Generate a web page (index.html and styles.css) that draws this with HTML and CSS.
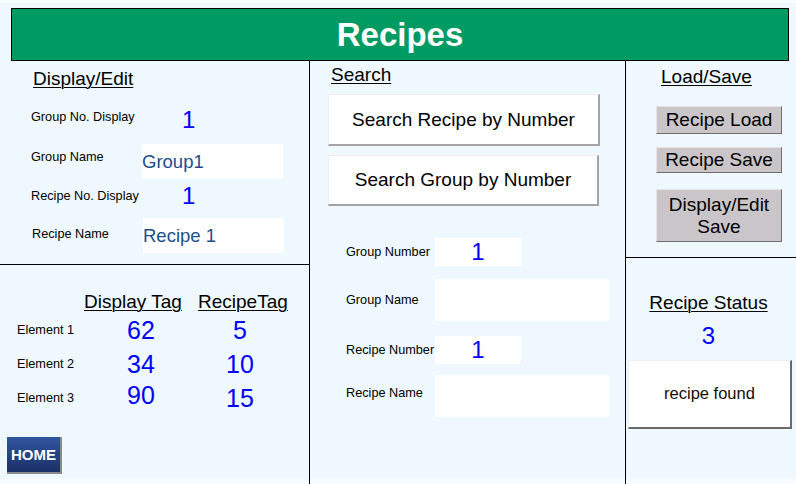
FILE: index.html
```html
<!DOCTYPE html>
<html lang="en">
<head>
<meta charset="utf-8">
<title>Recipes</title>
<link rel="stylesheet" href="styles.css">
</head>
<body>
<div class="screen">
  <header class="title-bar"><h1 class="title">Recipes</h1></header>
  <main class="panels">
    <section class="col col-left">
      <div class="edit-panel">
        <h2 class="heading edit-heading">Display/Edit</h2>
        <div class="field row-a"><span class="lbl lift-6">Group No. Display</span><span class="num">1</span></div>
        <div class="field row-b"><span class="lbl lift-9">Group Name</span><span class="text-box">Group1</span></div>
        <div class="field row-c"><span class="lbl">Recipe No. Display</span><span class="num">1</span></div>
        <div class="field row-d"><span class="lbl lift-4">Recipe Name</span><span class="text-box tb-d">Recipe 1</span></div>
      </div>
      <div class="tag-panel">
        <div class="tag-grid">
          <span></span><span class="heading">Display Tag</span><span class="heading">RecipeTag</span>
          <span class="lbl">Element 1</span><span class="big c2">62</span><span class="big c3">5</span>
          <span class="lbl">Element 2</span><span class="big c2">34</span><span class="big c3">10</span>
          <span class="lbl">Element 3</span><span class="big c2 up">90</span><span class="big c3">15</span>
        </div>
        <button class="home" type="button">HOME</button>
      </div>
    </section>

    <section class="col col-mid">
      <h2 class="heading search-heading">Search</h2>
      <button class="search-btn sb-1" type="button">Search Recipe by Number</button>
      <button class="search-btn sb-2" type="button">Search Group by Number</button>
      <div class="sfield sf-1"><span class="lbl">Group Number</span><span class="num-box">1</span></div>
      <div class="sfield sf-2"><span class="lbl">Group Name</span><span class="wide-box"></span></div>
      <div class="sfield sf-3"><span class="lbl">Recipe Number</span><span class="num-box">1</span></div>
      <div class="sfield sf-4"><span class="lbl lift-6">Recipe Name</span><span class="wide-box"></span></div>
    </section>

    <section class="col col-right">
      <div class="load-panel">
        <h2 class="heading load-heading">Load/Save</h2>
        <button class="gray-btn gb-load" type="button">Recipe Load</button>
        <button class="gray-btn gb-save" type="button">Recipe Save</button>
        <button class="gray-btn gb-edit" type="button">Display/Edit<br>Save</button>
      </div>
      <div class="status-panel">
        <h2 class="heading status-heading">Recipe Status</h2>
        <div class="status-num">3</div>
        <div class="status-box">recipe found</div>
      </div>
    </section>
  </main>
</div>
</body>
</html>
```

FILE: styles.css
```css
* { box-sizing: border-box; }

html, body {
  margin: 0;
  padding: 0;
}

body {
  width: 796px;
  height: 484px;
  overflow: hidden;
  background: #f8fcff;
  font-family: "Liberation Sans", Arial, sans-serif;
  color: #000;
}

.screen {
  width: 796px;
  height: 484px;
  background: linear-gradient(to bottom, #f8fcff 0, #f8fcff 3px, #eef8fe 3px, #eef8fe 479px, #f8fcff 479px);
  display: flex;
  flex-direction: column;
}

/* ---------- title bar ---------- */
.title-bar {
  margin: 8px 7px 0 11px;
  height: 53px;
  background: #009b62;
  border: 1px solid #000;
  display: flex;
  align-items: center;
  justify-content: center;
}

.title {
  margin: 0;
  font-size: 33px;
  font-weight: bold;
  line-height: 51px;
  color: #fff;
}

/* ---------- columns ---------- */
.panels {
  display: flex;
  height: 423px;
}

.col {
  height: 423px;
  display: flex;
  flex-direction: column;
  align-items: flex-start;
}

.col-left {
  width: 310px;
  border-right: 1px solid #000;
}

.col-mid {
  width: 316px;
  border-right: 1px solid #000;
}

.col-right {
  width: 170px;
}

.heading {
  margin: 0;
  font-size: 19px;
  font-weight: normal;
  line-height: 22px;
  text-decoration: underline;
  text-underline-offset: 2px;
  text-decoration-thickness: 1px;
  white-space: nowrap;
}

.lbl {
  font-size: 12.7px;
  line-height: 16px;
  white-space: nowrap;
}

.lift-4 { margin-bottom: 4px; }
.lift-6 { margin-bottom: 6px; }
.lift-9 { margin-bottom: 9px; }

/* ---------- display / edit ---------- */
.edit-panel {
  width: 100%;
  height: 204px;
  border-bottom: 1px solid #000;
  padding-top: 7px;
  display: flex;
  flex-direction: column;
}

.edit-heading { margin-left: 33px; align-self: flex-start; }

.field {
  display: flex;
  align-items: center;
}

.field .lbl {
  width: 142px;
  padding-left: 31px;
}

.row-a { margin-top: 16px; height: 28px; }
.row-b { margin-top: 10px; height: 35px; }
.row-c { margin-top: 3px; height: 28px; }
.row-d { margin-top: 8px; height: 35px; }
.row-d .lbl { padding-left: 32px; }

.num {
  margin-left: 40px;
  font-size: 24px;
  line-height: 28px;
  color: #0000ff;
}

.text-box {
  width: 141px;
  height: 35px;
  background: #fff;
  color: #1b4f8a;
  font-size: 18.5px;
  line-height: 35px;
  padding-left: 0;
}

.tb-d { margin-left: 1px; }

/* ---------- tags ---------- */
.tag-panel {
  width: 100%;
  flex: 1;
  padding-top: 26px;
  display: flex;
  flex-direction: column;
}

.tag-grid {
  display: grid;
  grid-template-columns: 67px 114px 93px;
  grid-template-rows: 22px 34px 34px 34px;
  padding-left: 17px;
  align-items: center;
}

.big {
  font-size: 25px;
  line-height: 34px;
  color: #0000ff;
  text-align: center;
}

.c3 { padding-right: 9px; }
.up { line-height: 28px; align-self: start; }

.home {
  margin: 22px 0 0 7px;
  width: 55px;
  height: 37px;
  padding: 0;
  border: none;
  border-right: 2px solid #8a8a8a;
  border-bottom: 2px solid #8a8a8a;
  background: linear-gradient(to bottom, #30569f, #1a3068);
  color: #fff;
  font-family: "Liberation Sans", Arial, sans-serif;
  font-size: 15px;
  font-weight: bold;
  line-height: 35px;
  text-align: center;
}

/* ---------- search ---------- */
.search-heading {
  margin-top: 3px;
  margin-left: 21px;
}

.search-btn {
  margin-left: 18px;
  padding: 0;
  background: #fff;
  border: 1px solid #f3ebee;
  border-right: 2px solid #a4a4a4;
  border-bottom: 2px solid #a4a4a4;
  font-family: "Liberation Sans", Arial, sans-serif;
  font-size: 19px;
  color: #000;
  text-align: center;
}

.sb-1 { margin-top: 8px; width: 272px; height: 52px; }
.sb-2 { margin-top: 9px; width: 271px; height: 51px; }

.sfield {
  display: flex;
  align-items: center;
}

.sfield .lbl {
  width: 125px;
  padding-left: 36px;
}

.sf-1 { margin-top: 32px; }
.sf-2 { margin-top: 13px; }
.sf-3 { margin-top: 15px; }
.sf-4 { margin-top: 11px; }

.num-box {
  width: 86px;
  height: 28px;
  background: #fff;
  color: #0000ff;
  font-size: 24px;
  line-height: 28px;
  text-align: center;
}

.wide-box {
  width: 174px;
  height: 42px;
  background: #fff;
}

/* ---------- load / save ---------- */
.load-panel {
  width: 100%;
  height: 197px;
  border-bottom: 1px solid #000;
  padding-top: 5px;
  display: flex;
  flex-direction: column;
  align-items: flex-start;
}

.load-heading { margin-left: 35px; }

.gray-btn {
  margin-left: 30px;
  width: 126px;
  padding: 0;
  background: #c9c5c9;
  border: 1px solid #e6e3e6;
  border-right: 1px solid #6e6e6e;
  border-bottom: 1px solid #6e6e6e;
  font-family: "Liberation Sans", Arial, sans-serif;
  font-size: 19px;
  line-height: 22px;
  color: #000;
  text-align: center;
}

.gb-load { margin-top: 18px; height: 28px; }
.gb-save { margin-top: 13px; height: 26px; }
.gb-edit { margin-top: 16px; height: 53px; }

.status-panel {
  width: 100%;
  flex: 1;
  padding-top: 34px;
  display: flex;
  flex-direction: column;
  align-items: center;
}

.status-heading {
  margin-right: 5px;
}

.status-num {
  margin-top: 8px;
  margin-right: 5px;
  font-size: 24px;
  line-height: 28px;
  color: #0000ff;
}

.status-box {
  margin-top: 10px;
  align-self: flex-start;
  margin-left: 2px;
  width: 164px;
  height: 69px;
  background: #fff;
  border: 1px solid #f2eef0;
  border-right: 2px solid #6a6a6a;
  border-bottom: 2px solid #6a6a6a;
  font-size: 16.5px;
  line-height: 65px;
  text-align: center;
  color: #1a0a0a;
}
```
